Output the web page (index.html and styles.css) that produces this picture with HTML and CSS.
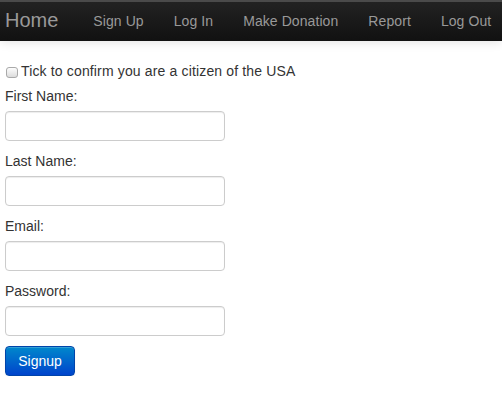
FILE: index.html
```html
<!DOCTYPE html>
<html>
<head>
<meta charset="utf-8">
<link rel="stylesheet" href="styles.css">
</head>
<body>
<div class="navbar">
  <a class="brand" href="#">Home</a>
  <ul class="nav">
    <li><a href="#">Sign Up</a></li>
    <li><a href="#">Log In</a></li>
    <li><a href="#">Make Donation</a></li>
    <li><a href="#">Report</a></li>
    <li><a href="#">Log Out</a></li>
  </ul>
</div>
<form class="signup">
  <label class="check"><input type="checkbox" class="cb"> Tick to confirm you are a citizen of the USA</label>
  <label class="lbl">First Name:</label>
  <input class="field" type="text">
  <label class="lbl">Last Name:</label>
  <input class="field" type="text">
  <label class="lbl">Email:</label>
  <input class="field" type="text">
  <label class="lbl">Password:</label>
  <input class="field" type="password">
  <button class="btn" type="button">Signup</button>
</form>
</body>
</html>
```

FILE: styles.css
```css
* { box-sizing: border-box; }
html, body { margin: 0; padding: 0; background: #fff; }
body {
  font-family: "Liberation Sans", Arial, sans-serif;
  font-size: 14px;
  line-height: 20px;
  color: #333;
  overflow: hidden;
}
.navbar {
  height: 41px;
  display: flex;
  flex-wrap: nowrap;
  align-items: flex-start;
  padding-left: 5px;
  background: linear-gradient(to bottom, #222 0%, #111 100%);
  border-top: 2px solid #4a4a4a;
  box-shadow: 0 1px 10px rgba(0,0,0,0.12);
  white-space: nowrap;
  overflow: hidden;
}
.brand {
  display: block;
  padding: 8px 20px 10px 0;
  font-size: 20px;
  line-height: 20px;
  color: #999;
  text-decoration: none;
}
.nav {
  display: flex;
  list-style: none;
  margin: 0;
  padding: 0;
}
.nav a {
  display: block;
  padding: 9px 15px 10px;
  color: #999;
  text-decoration: none;
  font-size: 14px;
  line-height: 20px;
  letter-spacing: 0.08px;
}
.signup {
  padding: 20px 5px 0;
  display: flex;
  flex-direction: column;
  align-items: flex-start;
}
.check {
  display: flex;
  align-items: center;
  height: 20px;
  margin-bottom: 5px;
  letter-spacing: 0.15px;
}
.cb {
  -webkit-appearance: none;
  appearance: none;
  width: 12px;
  height: 11px;
  margin: 3px 3px 0 1px;
  border: 1px solid #a9a9a9;
  border-radius: 3px;
  background: linear-gradient(to bottom, #fdfdfd, #dcdcdc);
}
.lbl {
  display: block;
  height: 20px;
  margin-bottom: 5px;
}
.field {
  width: 220px;
  height: 30px;
  padding: 4px 6px;
  margin: 0 0 10px;
  border: 1px solid #ccc;
  border-radius: 4px;
  box-shadow: inset 0 1px 1px rgba(0,0,0,0.075);
  font-family: inherit;
  font-size: 14px;
  color: #555;
  background: #fff;
}
.btn {
  width: 70px;
  height: 30px;
  padding: 4px 12px;
  border: 1px solid #0044aa;
  border-radius: 4px;
  background: linear-gradient(to bottom, #0088cc, #0044cc);
  color: #fff;
  font-family: inherit;
  font-size: 14px;
  line-height: 20px;
  box-shadow: inset 0 1px 0 rgba(255,255,255,0.2), 0 1px 2px rgba(0,0,0,0.05);
}
```
